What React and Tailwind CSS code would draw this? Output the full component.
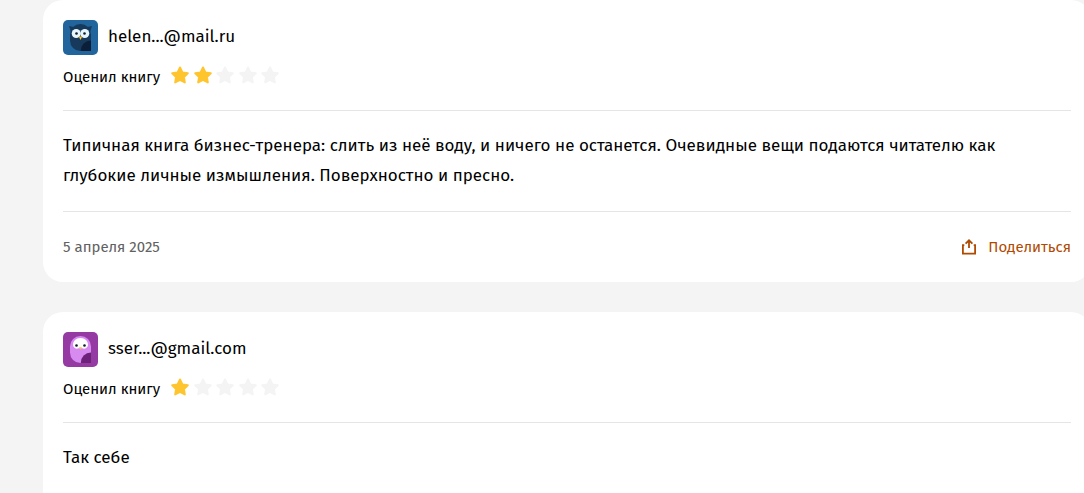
import React from "react";

function BlueOwl() {
  return (
    <svg viewBox="0 0 35 35" className="size-[35px] shrink-0 rounded-[5px]" aria-hidden="true">
      <rect width="35" height="35" fill="#22659c" />
      <path d="M6 6 13 7.500 8 12Z M29 6 22 7.500 27 12Z" fill="#16395c" />
      <path d="M7 14.500a10.500 10.500 0 0 1 21 0V31H17.500A10.500 10.500 0 0 1 7 20.500Z" fill="#16395c" />
      <path d="M28 20.500V31H17.800A10.300 10.300 0 0 1 28 20.500Z" fill="#0b2038" />
      <circle cx="13.200" cy="13.500" r="4.500" fill="#e6f6fb" />
      <circle cx="21.800" cy="13.500" r="4.500" fill="#e6f6fb" />
      <circle cx="13.500" cy="13.500" r="1.300" fill="#111d2b" />
      <circle cx="21.500" cy="13.500" r="1.300" fill="#111d2b" />
      <path d="M15.800 16.500h3.400l-1.700 3.500Z" fill="#ffc52e" />
    </svg>
  );
}

function PurpleOwl() {
  return (
    <svg viewBox="0 0 35 35" className="size-[35px] shrink-0 rounded-[5px]" aria-hidden="true">
      <rect width="35" height="35" fill="#963aa3" />
      <path d="M7 14.500a10.500 10.500 0 0 1 21 0V31H17.500A10.500 10.500 0 0 1 7 20.500Z" fill="#d78af0" />
      <path d="M28 20.500V31H17.800A10.300 10.300 0 0 1 28 20.500Z" fill="#6d2179" />
      <path d="M17.500 6C22 6 25 9 25 13a3.800 3.800 0 0 1-5.500 3.200h-4A3.800 3.800 0 0 1 10 13c0-4 3-7 7.500-7Z" fill="#fff" />
      <circle cx="13.500" cy="13.500" r="1.300" fill="#111d2b" />
      <circle cx="21.500" cy="13.500" r="1.300" fill="#111d2b" />
      <path d="M16 15.200h3l-1.500 2.500Z" fill="#ffc52e" />
    </svg>
  );
}

function Star({ filled }) {
  return (
    <svg
      viewBox="0 0 20 20"
      className={filled ? "size-5 text-[#ffc52e]" : "size-5 text-[#f4f4f4]"}
      fill="currentColor"
      stroke="currentColor"
      strokeWidth="2"
      strokeLinejoin="round"
      aria-hidden="true"
    >
      <path d="m10 2.500 2.400 4.900 5.400.800-3.900 3.800.900 5.400-4.800-2.500-4.800 2.500.900-5.400-3.900-3.800 5.400-.800Z" />
    </svg>
  );
}

function ShareIcon() {
  return (
    <svg viewBox="0 0 16 16" className="size-4" fill="none" stroke="currentColor" strokeWidth="1.800" aria-hidden="true">
      <path d="M3.300 6.200H1.900v8.500h12.200V6.200h-1.400" />
      <path d="M8 9V1.500M4.600 4.700 8 1.300l3.400 3.400" />
    </svg>
  );
}

function Review({ avatar, name, rating, date, children }) {
  return (
    <article className="rounded-[20px] bg-white p-5">
      <header className="border-b border-[#e5e5e5] pb-[21px]">
        <div className="flex items-start gap-2.5">
          {avatar}
          <h2 className="pt-px text-[17px] leading-8">{name}</h2>
        </div>
        <div className="mt-2 flex items-start gap-2.5">
          <span className="pt-0.5 text-[15px] leading-6">Оценил книгу</span>
          <div className="flex w-[110px] justify-between pt-0.5" role="img" aria-label={`${rating} / 5`}>
            {[1, 2, 3, 4, 5].map((n) => (
              <Star key={n} filled={n <= rating} />
            ))}
          </div>
        </div>
      </header>
      <p className="py-5 text-[17px] leading-[30px]">{children}</p>
      {date && (
        <footer className="flex items-center justify-between border-t border-[#e5e5e5] pt-5 text-[15px] leading-[30px]">
          <time className="text-[#616161]">{date}</time>
          <button type="button" className="flex items-center gap-[11px] text-[#b04a00]">
            <ShareIcon />
            Поделиться
          </button>
        </footer>
      )}
    </article>
  );
}

export default function App() {
  return (
    <div className="h-screen overflow-hidden bg-[#f4f4f4] pl-[43px] font-['Fira_Sans','Noto_Sans',sans-serif] text-black">
      <main className="-mr-[7px] flex flex-col gap-[30px]">
        <Review avatar={<BlueOwl />} name="helen...@mail.ru" rating={2} date="5 апреля 2025">
          Типичная книга бизнес-тренера: слить из неё воду, и ничего не останется. Очевидные вещи подаются читателю как
          глубокие личные измышления. Поверхностно и пресно.
        </Review>
        <Review avatar={<PurpleOwl />} name="sser...@gmail.com" rating={1}>
          Так себе
        </Review>
      </main>
    </div>
  );
}
